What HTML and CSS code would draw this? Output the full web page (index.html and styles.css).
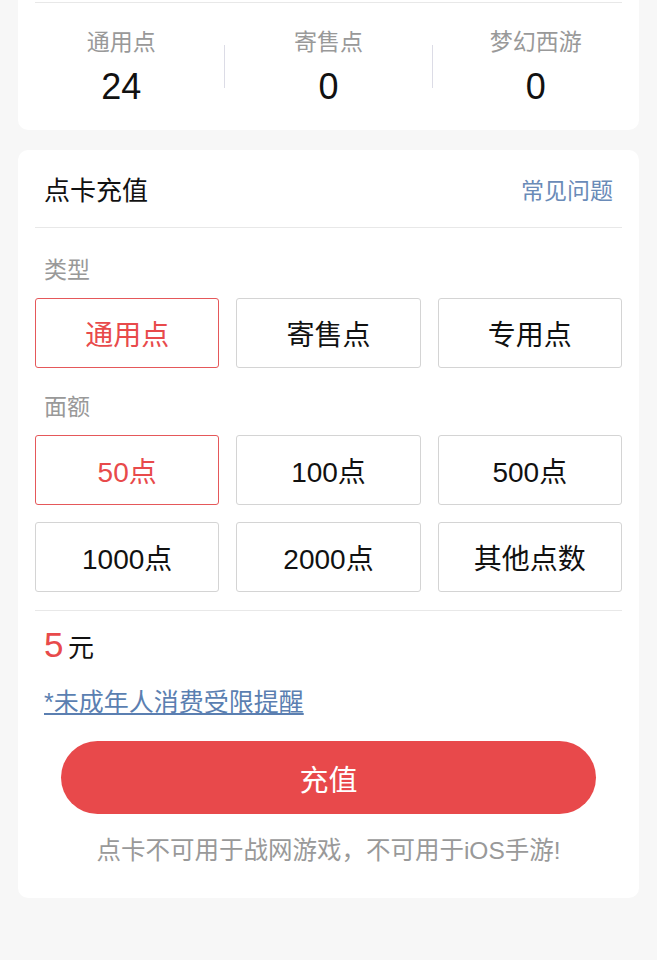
FILE: index.html
```html
<!DOCTYPE html>
<html lang="zh-CN">
<head>
  <meta charset="UTF-8" />
  <title>点卡充值</title>
  <link rel="stylesheet" href="styles.css">
</head>
<body>
  <div class="card summary">
    <div class="summary-top"></div>
    <div class="stats">
      <div class="stat">
        <div class="stat-label">通用点</div>
        <div class="stat-value">24</div>
      </div>
      <div class="stat-sep"></div>
      <div class="stat">
        <div class="stat-label">寄售点</div>
        <div class="stat-value">0</div>
      </div>
      <div class="stat-sep"></div>
      <div class="stat">
        <div class="stat-label">梦幻西游</div>
        <div class="stat-value">0</div>
      </div>
    </div>
  </div>

  <div class="card recharge">
    <div class="recharge-head">
      <span class="title">点卡充值</span>
      <a class="faq" href="#">常见问题</a>
    </div>

    <div class="group-label">类型</div>
    <div class="options">
      <div class="option active">通用点</div>
      <div class="option">寄售点</div>
      <div class="option">专用点</div>
    </div>

    <div class="group-label">面额</div>
    <div class="options amounts">
      <div class="option active">50点</div>
      <div class="option">100点</div>
      <div class="option">500点</div>
      <div class="option">1000点</div>
      <div class="option">2000点</div>
      <div class="option">其他点数</div>
    </div>

    <div class="price">
      <span class="price-num">5</span>
      <span class="price-unit">元</span>
    </div>
    <a class="notice" href="#">*未成年人消费受限提醒</a>

    <button class="submit">充值</button>
    <p class="tip">点卡不可用于战网游戏，不可用于iOS手游!</p>
  </div>
</body>
</html>
```

FILE: styles.css
```css
body {
  margin: 0;
  background-color: #f7f7f7;
  font-family: "Liberation Sans", "Noto Sans CJK SC", sans-serif;
  color: #111;
}
.card {
  margin: 0 18px;
  background-color: #fff;
  border-radius: 10px;
}
.summary {
  border-radius: 0 0 10px 10px;
  padding-bottom: 23px;
}
.summary-top {
  height: 2px;
  margin: 0 17px;
  border-bottom: 1px solid #e8e8e8;
}
.stats {
  display: flex;
  padding-top: 24px;
}
.stat {
  flex: 1;
  text-align: center;
}
.stat-sep {
  width: 1px;
  height: 43px;
  margin-top: 18px;
  background-color: #dcdce6;
}
.stat-label {
  font-size: 23px;
  line-height: 30px;
  color: #999;
}
.stat-value {
  margin-top: 10px;
  font-size: 36px;
  line-height: 40px;
  color: #111;
}
.recharge {
  margin-top: 20px;
  padding: 0 17px 32px;
}
.recharge-head {
  display: flex;
  justify-content: space-between;
  align-items: center;
  height: 77px;
  padding: 0 9px;
  border-bottom: 1px solid #e8e8e8;
}
.title {
  font-size: 26px;
}
.faq {
  font-size: 23px;
  color: #6a8bb8;
  text-decoration: none;
}
.group-label {
  margin: 27px 9px 13px;
  font-size: 23px;
  line-height: 30px;
  color: #999;
}
.options + .group-label {
  margin-top: 24px;
}
.options {
  display: grid;
  grid-template-columns: repeat(3, 1fr);
  gap: 17px;
}
.option {
  height: 68px;
  display: flex;
  align-items: center;
  justify-content: center;
  border: 1px solid #d4d4d4;
  border-radius: 3px;
  font-size: 28px;
  color: #111;
}
.option.active {
  border-color: #e5585a;
  color: #e84a4b;
}
.amounts {
  padding-bottom: 18px;
  border-bottom: 1px solid #e8e8e8;
}
.price {
  margin: 14px 9px 0;
  height: 40px;
  line-height: 40px;
}
.price-num {
  font-size: 35px;
  color: #e84a4b;
}
.price-unit {
  font-size: 26px;
}
.notice {
  display: inline-block;
  margin: 22px 9px 0;
  font-size: 25px;
  line-height: 30px;
  color: #5b7fb1;
}
.submit {
  display: block;
  width: calc(100% - 52px);
  height: 73px;
  margin: 24px 26px 0;
  border: none;
  border-radius: 37px;
  background-color: #e8494b;
  color: #fff;
  font-family: inherit;
  font-size: 29px;
}
.tip {
  margin: 22px 0 0;
  text-align: center;
  font-size: 24.5px;
  line-height: 30px;
  color: #999;
}
```
